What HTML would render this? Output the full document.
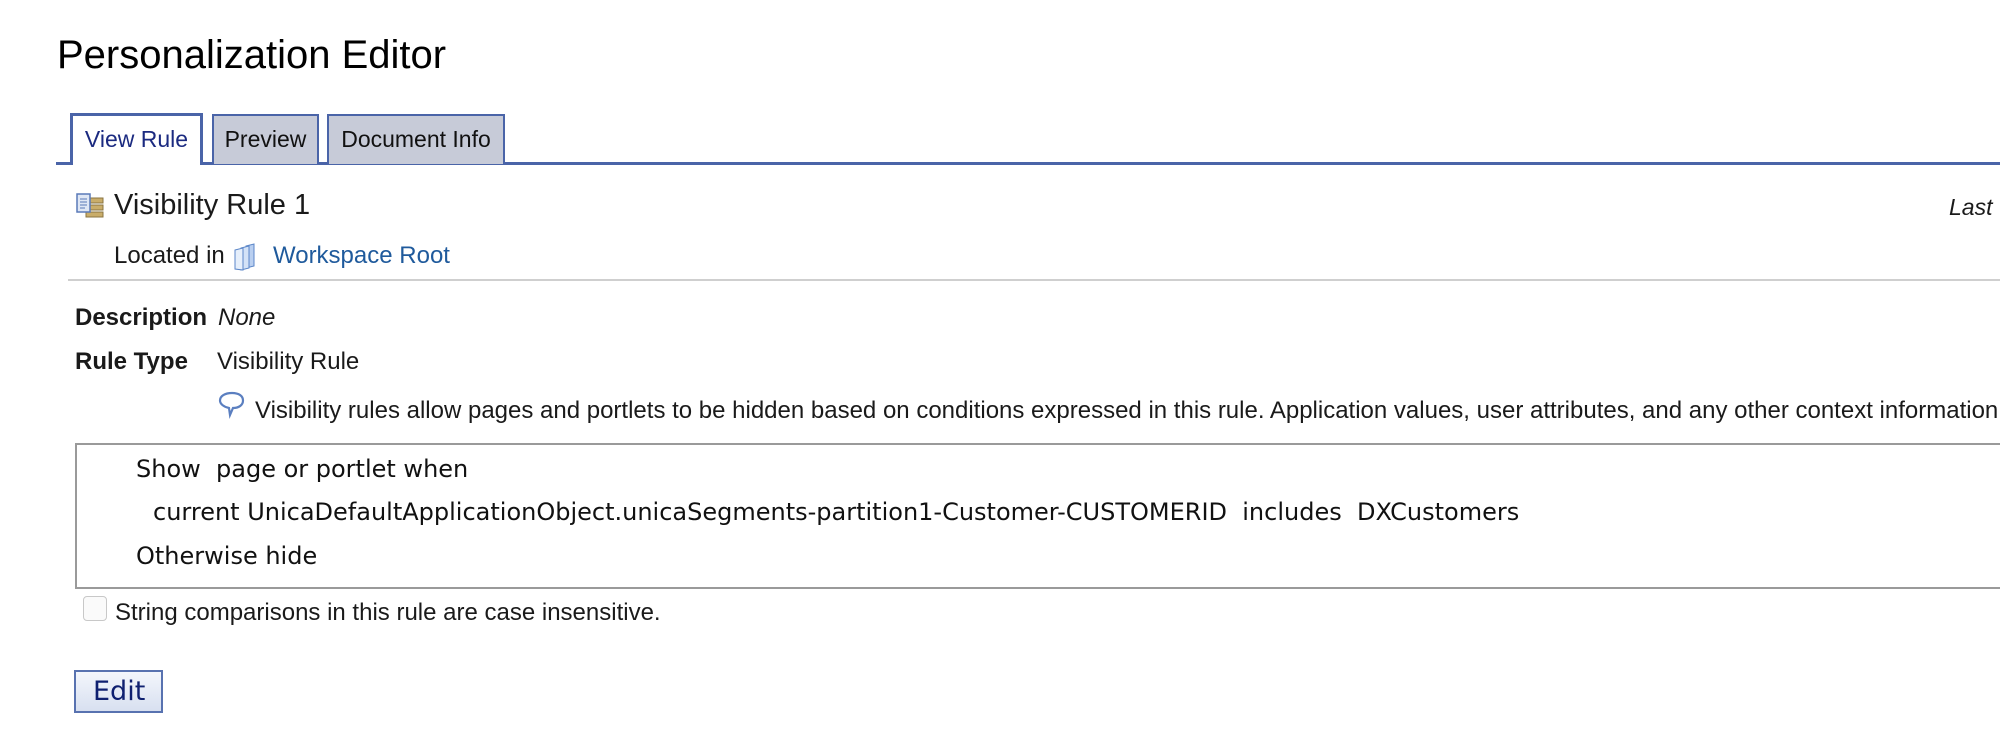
<!DOCTYPE html>
<html><head><meta charset="utf-8"><style>
*{margin:0;padding:0;box-sizing:border-box}
body{width:2000px;height:752px;overflow:hidden;background:#fff;font-family:"Liberation Sans",Arial,sans-serif;color:#1a1a1a;position:relative}
.a{position:absolute;white-space:nowrap}
.tab{position:absolute;top:114px;height:50px;font-size:23px;line-height:46px;text-align:center;border:2px solid #4a64a8;border-bottom:none;background:#c7cbd8;color:#111}
.mono{font-family:"DejaVu Sans",sans-serif;font-size:24px;color:#111}
</style></head><body>
<div class="a" style="left:57px;top:33px;font-size:40px;color:#000">Personalization Editor</div>

<div class="a" style="left:56px;top:162px;width:1944px;height:3px;background:#4a64a8"></div>
<div class="tab" style="left:70px;width:133px;height:52px;background:#fff;border:3px solid #4a64a8;border-bottom:none;color:#1b2a80;top:113px">View Rule</div>
<div class="tab" style="left:212px;width:107px">Preview</div>
<div class="tab" style="left:327px;width:178px">Document Info</div>

<svg class="a" style="left:76px;top:193px" width="28" height="27" viewBox="0 0 28 27">
<rect x="10" y="5" width="17" height="5" fill="#c9ad6a" stroke="#8a7440"/>
<rect x="10" y="12" width="17" height="5" fill="#c9ad6a" stroke="#8a7440"/>
<rect x="10" y="19" width="17" height="5" fill="#c9ad6a" stroke="#8a7440"/>
<rect x="1" y="1" width="13" height="18" fill="#dfe7f5" stroke="#5a7ab8" stroke-width="1.5"/>
<path d="M4 6h7M4 9h7M4 12h7M4 15h5" stroke="#5a7ab8"/>
</svg>
<div class="a" style="left:114px;top:189px;font-size:29px">Visibility Rule 1</div>
<div class="a" style="left:1949px;top:194px;font-size:23px;font-style:italic">Last</div>

<div class="a" style="left:114px;top:242px;font-size:24px">Located in</div>
<svg class="a" style="left:233px;top:243px" width="28" height="28" viewBox="0 0 28 28">
<path d="M13 3l8-2v22l-8 2z" fill="#b9cff0" stroke="#5b86c8"/>
<path d="M8 5l8-2v22l-8 2z" fill="#d3e2f7" stroke="#5b86c8"/>
<path d="M2 7l8-2v22l-8 -1z" fill="#e6effb" stroke="#5b86c8"/>
</svg>
<div class="a" style="left:273px;top:242px;font-size:24px;color:#1f5a9c">Workspace Root</div>
<div class="a" style="left:68px;top:279px;width:1932px;height:2px;background:#cfcfcf"></div>

<div class="a" style="left:75px;top:304px;font-size:24px;font-weight:bold">Description</div>
<div class="a" style="left:218px;top:304px;font-size:24px;font-style:italic">None</div>
<div class="a" style="left:75px;top:348px;font-size:24px;font-weight:bold">Rule Type</div>
<div class="a" style="left:217px;top:348px;font-size:24px">Visibility Rule</div>

<svg class="a" style="left:217px;top:390px" width="30" height="30" viewBox="0 0 30 30">
<path d="M15 3c7 0 11 3 11 7.5S22 18 16 18l-3 7 -1-7c-5-1-9-4-9-7.5C3 6 8 3 15 3z" fill="#fff" stroke="#5b7fc0" stroke-width="2.2"/>
</svg>
<div class="a" style="left:255px;top:397px;font-size:24px">Visibility rules allow pages and portlets to be hidden based on conditions expressed in this rule. Application values, user attributes, and any other context information</div>

<div class="a" style="left:75px;top:443px;width:1940px;height:146px;border:2px solid #9a9a9a"></div>
<div class="a mono" style="left:136px;top:455px">Show&nbsp;&nbsp;page or portlet when</div>
<div class="a mono" style="left:153px;top:498px">current UnicaDefaultApplicationObject.unicaSegments-partition1-Customer-CUSTOMERID&nbsp;&nbsp;includes&nbsp;&nbsp;DXCustomers</div>
<div class="a mono" style="left:136px;top:542px">Otherwise hide</div>

<div class="a" style="left:83px;top:596px;width:24px;height:25px;border:1.5px solid #c8c8c8;border-radius:4px;background:#fafafa"></div>
<div class="a" style="left:115px;top:599px;font-size:24px">String comparisons in this rule are case insensitive.</div>

<div class="a" style="left:74px;top:670px;width:89px;height:43px;border:2px solid #5872b0;background:linear-gradient(#f3f6fc,#d8e0f0);font-family:'DejaVu Sans',sans-serif;font-size:27px;color:#0f2070;line-height:40px;padding-left:17px">Edit</div>
</body></html>
